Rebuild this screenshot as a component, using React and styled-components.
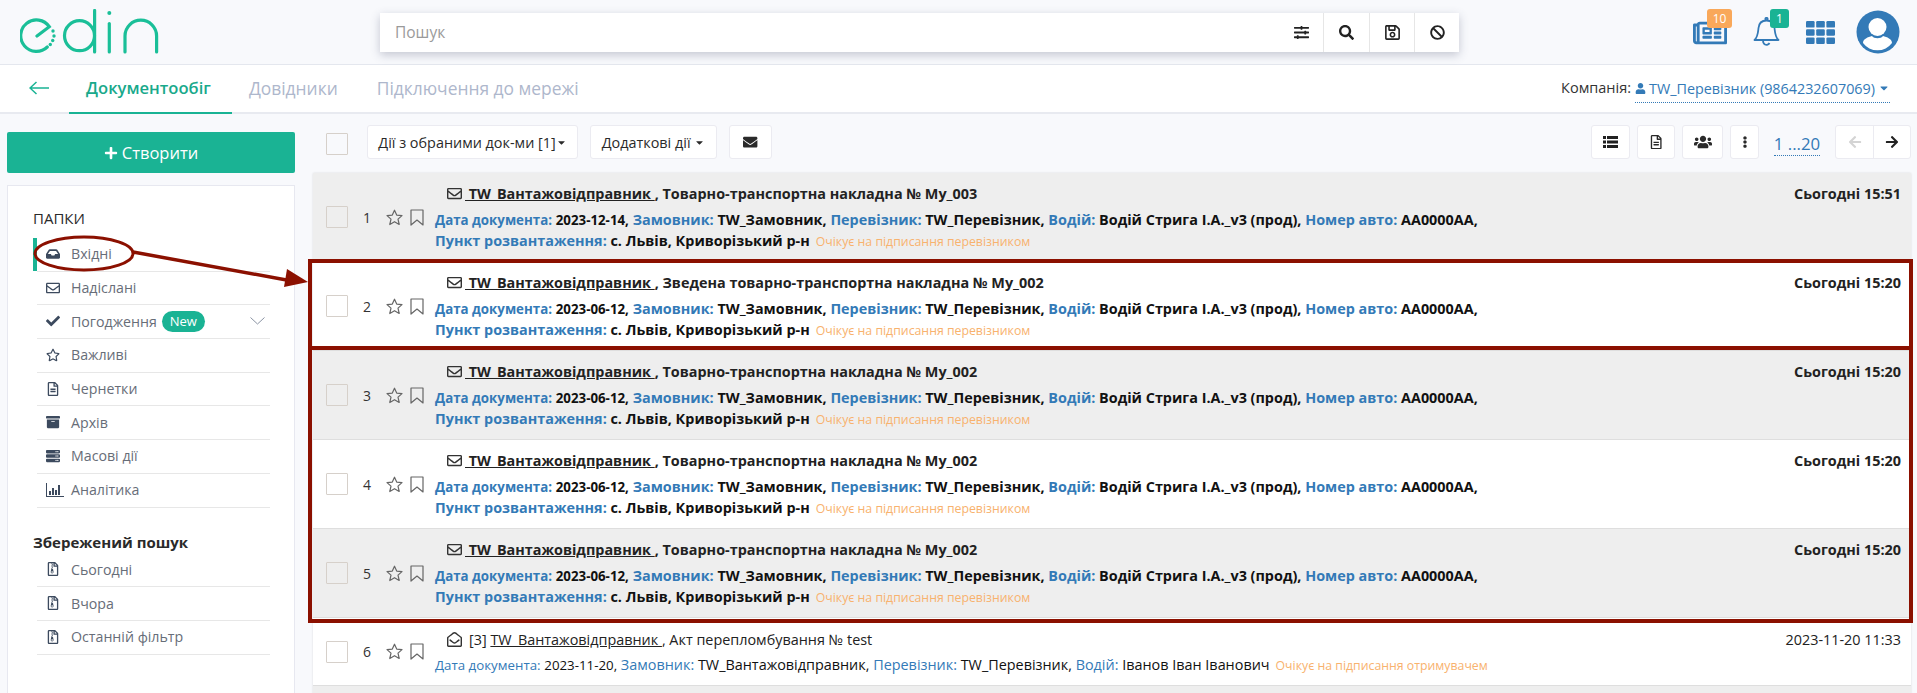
import React from 'react';
import styled, { createGlobalStyle } from 'styled-components';
import {
  FaRegEnvelope, FaRegEnvelopeOpen, FaSearch, FaRegSave, FaBan, FaSlidersH, FaCheck, FaRegStar,
  FaArchive, FaServer, FaRegFileAlt, FaUsers, FaEllipsisV, FaArrowLeft, FaArrowRight, FaUser,
  FaRegNewspaper, FaRegFileArchive, FaPlus, FaCaretDown, FaEnvelope, FaInbox,
} from 'react-icons/fa';

const Global = createGlobalStyle`
  html, body { margin: 0; padding: 0; background: #f8f9fc; height: 693px; overflow: hidden; }
  body { font-family: "Open Sans", "Noto Sans", sans-serif; font-size: 14px; color: #2a2a2a; }
  * { box-sizing: border-box; }
`;

const Page = styled.div`position: relative; width: 1917px; height: 693px; overflow: hidden;`;

const Header = styled.header`
  height: 65px; display: flex; align-items: flex-start; border-bottom: 1px solid #e4e7ee; padding-left: 20px; position: relative;
`;
const Logo = styled.svg`width: 140px; height: 46px; margin-top: 9px; flex: none;`;
const SearchBox = styled.div`
  margin: 13px 0 0 220px; width: 1079px; height: 39px; background: #fff; display: flex; align-items: stretch;
  box-shadow: 0 3px 9px rgba(60, 70, 100, .28);
`;
const SearchInput = styled.div`flex: 1; color: #9a9a9a; font-size: 15.5px; padding: 0 0 2px 15px; display: flex; align-items: center;`;
const SearchBtn = styled.div`
  width: ${p => p.$w}px; display: flex; align-items: center; justify-content: center; font-size: 15px; color: #222;
  border-left: ${p => (p.$plain ? 'none' : '1px solid #e6e6e6')};
`;
const HeaderIcons = styled.div`
  margin-left: auto; display: flex; align-items: flex-start; padding-right: 17px;
`;
const IconSlot = styled.div`position: relative; color: #337ab7; margin-left: ${p => p.$ml}px; margin-top: ${p => p.$mt}px; line-height: 0;`;
const Badge = styled.span`
  position: absolute; top: ${p => p.$top}px; left: ${p => p.$left}px; width: ${p => p.$w}px; height: 19px; border-radius: 3px;
  background: ${p => p.$c}; color: #fff; font-size: 12px; line-height: 19px; text-align: center;
`;

const Nav = styled.nav`
  height: 49px; background: #fff; border-bottom: 2px solid #e8eaf0; display: flex; align-items: stretch; padding-left: 29px;
`;
const Back = styled.div`width: 40px; color: #19b394; display: flex; align-items: center; padding-bottom: 2px;`;
const Tab = styled.div`
  font-size: ${p => (p.$on ? 16.6 : 17.4)}px; font-weight: ${p => (p.$on ? 600 : 500)}; color: ${p => (p.$on ? '#19a98b' : '#aeb7cc')};
  padding: 0 ${p => p.$pr}px 2px ${p => p.$pl}px; display: flex; align-items: center; height: 49px;
  border-bottom: 2px solid ${p => (p.$on ? '#19b394' : 'transparent')}; white-space: nowrap;
`;
const Company = styled.div`margin-left: auto; padding-right: 27px; display: flex; align-items: center; font-size: 14.5px; padding-bottom: 2px; color: #333;`;
const CompanyLink = styled.span`
  color: #337ab7; font-size: 14.35px; margin-left: 4px; border-bottom: 1px dotted #337ab7; display: inline-flex; align-items: center; gap: 3px; height: 25px; margin-top: 5px; padding-bottom: 3px;
`;

const Body = styled.div`display: flex; align-items: flex-start; height: 579px;`;
const Side = styled.aside`width: 288px; margin: 18px 0 0 7px; flex: none;`;
const CreateBtn = styled.div`
  height: 41px; background: #1ab394; border-radius: 2px; color: #fff; font-size: 16.5px; display: flex; align-items: center; justify-content: center; gap: 4px;
`;
const Panel = styled.div`
  margin-top: 12px; height: 520px; background: #fff; border: 1px solid #e7e8f0; padding: 23px 24px 0 25px;
`;
const PanelTitle = styled.div`font-size: 15px; font-weight: 500; color: #2a2a2a; line-height: 19px; margin-bottom: 10px;`;
const SavedTitle = styled.div`font-size: 15px; font-weight: 700; color: #2a2a2a; line-height: 19px; margin: 25px 0 2px 0;`;
const Item = styled.div`
  position: relative; height: 33.7px; margin-left: 4px; border-bottom: 1px solid #e7e7e7; display: flex; align-items: center; padding: 0 0 1px 9px; color: #676d78; font-size: 14.2px;
  &::before { content: ''; display: ${p => (p.$on ? 'block' : 'none')}; position: absolute; left: -4px; top: 0; bottom: 0; width: 4px; background: #1ab394; }
`;
const ItemIcon = styled.span`width: 25px; color: #3c4a5e; font-size: 14px; display: flex; align-items: center; flex: none;`;
const Pill = styled.span`
  margin-left: 5px; background: #1ab394; color: #fff; border-radius: 11px; height: 21px; width: 43px; display: flex; align-items: center; justify-content: center; font-size: 13px; font-weight: 500;
`;
const Chevron = styled.svg`margin-left: auto; margin-right: 5px; width: 15px; height: 8px;`;

const Main = styled.main`flex: 1; padding: 11px 0 0 18px; min-width: 0;`;
const Toolbar = styled.div`height: 48px; display: flex; align-items: flex-start;`;
const Check = styled.span`
  display: block; flex: none; width: 22px; height: 22px; border: 1px solid #d6d0ca; border-radius: 1px;
`;
const ToolCheck = styled(Check)`margin: 8px 19px 0 13px;`;
const ToolBtn = styled.div`
  height: 34px; width: ${p => p.$w}px; margin-left: ${p => p.$ml ?? 0}px; background: #fff; border: 1px solid #ebebf1; border-radius: 3px; display: flex; align-items: center; justify-content: center; font-size: 14.4px; color: #2a2a2a; flex: none;
`;
const PageLink = styled.div`
  margin: 0 15px 0 15px; width: 46px; height: 31px; padding-top: 7px; color: #337ab7; font-size: 16.8px; border-bottom: 1px dotted #337ab7; display: flex; align-items: center; justify-content: center; white-space: nowrap;
`;
const BtnGroup = styled.div`display: flex; background: #fff; border: 1px solid #ebebf1; border-radius: 3px; height: 34px;`;
const GroupBtn = styled.div`width: 37px; display: flex; align-items: center; justify-content: center; font-size: 14px; color: ${p => (p.$off ? '#d4d4d4' : '#222')}; & + & { border-left: 1px solid #ebebf1; }`;
const Spacer = styled.div`flex: 1;`;
const Gap = styled.div`width: 6px; flex: none;`;

const List = styled.div`width: 1598px; box-shadow: 0 0 2px rgba(0,0,0,.12);`;
const Group = styled.div`
  position: relative;
  &::after { content: ''; position: absolute; z-index: 2; inset: ${p => p.$inset}; border: 4px solid #8b1000; pointer-events: none; }
`;
const Row = styled.div`
  height: ${p => p.$h}px; background: ${p => (p.$grey ? '#eeeeee' : '#fff')}; border-bottom: 1px solid #dedede; display: flex; align-items: center; padding-left: 13px;
`;
const Num = styled.span`width: 38px; flex: none; text-align: center; font-size: 14px; color: #333;`;
const Acts = styled.span`display: flex; align-items: center; width: 49px; flex: none; gap: 7px;`;
const Content = styled.div`flex: 1; min-width: 0; align-self: flex-start; padding: ${p => p.$pt ?? 10}px 10px 0 0;`;
const TitleLine = styled.div`display: flex; align-items: center; height: 21px; font-size: 14.4px; font-weight: ${p => (p.$read ? 400 : 700)}; color: #222; padding-left: 12px;`;
const TitleIcon = styled.span`display: inline-flex; width: ${p => p.$w ?? 18}px; flex: none; font-size: 15px; font-weight: 400; color: #333;`;
const Sender = styled.span`text-decoration: underline; white-space: pre;`;
const Subject = styled.span`white-space: pre;`;
const Time = styled.span`margin-left: auto; white-space: nowrap;`;
const Line = styled.div`height: 21px; line-height: 21px; margin-top: ${p => p.$mt ?? 0}px; font-size: 14.4px; font-weight: ${p => (p.$read ? 400 : 700)}; color: #111; white-space: nowrap;`;
const Label = styled.span`color: #337ab7; font-size: ${p => (p.$small ? 13.3 : 14.4)}px;`;
const Small = styled.span`font-size: 13.3px;`;
const Status = styled.span`color: #f8b26e; font-size: 12.3px; font-weight: 400; margin-left: 6px;`;

const Overlay = styled.svg`position: absolute; left: 0; top: 0; width: 1917px; height: 693px; pointer-events: none;`;

const Avatar = () => (
  <svg width="44" height="44" viewBox="0 0 44 44">
    <circle cx="22" cy="22" r="21.5" fill="#337ab7" />
    <circle cx="21.5" cy="17" r="9" fill="#fff" />
    <path d="M7 33 C7 29 12 27 16 26 C18 29 25 29 27 26 C31 27 36 29 36 33 A18 18 0 0 1 7 33 Z" fill="#fff" />
  </svg>
);
const Bell = () => (
  <svg width="27" height="29" viewBox="0 0 27 29" fill="none" stroke="#337ab7" strokeWidth="1.8" strokeLinejoin="round">
    <path d="M1.5 23 C5 20 5 15 5.5 11 C6 6 9 3.5 13.5 3.5 C18 3.5 21 6 21.5 11 C22 15 22 20 25.5 23 Z" />
    <path d="M10.5 23 a3 3 0 0 0 6 3 " />
    <circle cx="13.5" cy="2" r="1.2" />
  </svg>
);
const Grid = () => (
  <svg width="29" height="23" viewBox="0 0 29 23" fill="#337ab7">
    {[0, 1, 2].flatMap(r => [0, 1, 2].map(c => <rect key={`${r}-${c}`} x={c * 10.2} y={r * 8.2} width="8.6" height="6.6" rx="1.2" />))}
  </svg>
);
const Star = () => (
  <svg width="17" height="17" viewBox="0 0 17 17" fill="none" stroke="#666" strokeWidth="1.2" strokeLinejoin="round">
    <path d="M8.5 1.2 L10.7 6.1 L16 6.6 L12 10.1 L13.2 15.5 L8.5 12.7 L3.8 15.5 L5 10.1 L1 6.6 L6.3 6.1 Z" />
  </svg>
);
const Bookmark = () => (
  <svg width="14" height="17" viewBox="0 0 14 17" fill="none" stroke="#666" strokeWidth="1.2" strokeLinejoin="round">
    <path d="M1 1 H13 V16 L7 11 L1 16 Z" />
  </svg>
);
const BackArrow = () => (
  <svg width="20" height="14" viewBox="0 0 20 14" fill="none" stroke="#19b394" strokeWidth="1.5">
    <path d="M20 7 H1 M7.5 1 L1 7 L7.5 13" />
  </svg>
);
const ChartIcon = () => (
  <svg width="18" height="14" viewBox="0 0 18 14" fill="#3c4a5e">
    <rect x="0" y="0" width="1" height="14" /><rect x="0" y="13" width="18" height="1" />
    <rect x="3" y="8" width="2" height="4" /><rect x="6" y="5" width="2" height="7" /><rect x="9" y="7" width="2" height="5" /><rect x="12" y="2" width="2" height="10" />
  </svg>
);
const ListIcon = () => (
  <svg width="15" height="12" viewBox="0 0 15 12" fill="#222">
    {[0, 4.5, 9].map(y => (
      <g key={y}><rect x="0" y={y} width="3" height="3" /><rect x="4" y={y} width="11" height="3" /></g>
    ))}
  </svg>
);

const folders = [
  [<FaInbox />, 'Вхідні', true],
  [<FaRegEnvelope />, 'Надіслані'],
  [<FaCheck />, 'Погодження', false, true],
  [<FaRegStar />, 'Важливі'],
  [<FaRegFileAlt />, 'Чернетки'],
  [<FaArchive />, 'Архів'],
  [<FaServer />, 'Масові дії'],
  [<ChartIcon />, 'Аналітика'],
];
const saved = ['Сьогодні', 'Вчора', 'Останній фільтр'];

const RowView = ({ n, grey, date = '2023-06-12', subject, time = 'Сьогодні 15:20' }) => (
  <Row $grey={grey} $h={89}>
    <Check />
    <Num>{n}</Num>
    <Acts><Star /><Bookmark /></Acts>
    <Content>
      <TitleLine>
        <TitleIcon><FaRegEnvelope /></TitleIcon>
        <Sender> TW_Вантажовідправник </Sender>
        <Subject>, {subject}</Subject>
        <Time>{time}</Time>
      </TitleLine>
      <Line $mt={5}>
        <Label $small>Дата документа:</Label> <Small>{date},</Small> <Label>Замовник:</Label> TW_Замовник, <Label>Перевізник:</Label> TW_Перевізник, <Label>Водій:</Label> Водій Стрига І.А._v3 (прод), <Label>Номер авто:</Label> АА0000АА,
      </Line>
      <Line>
        <Label>Пункт розвантаження:</Label> с. Львів, Криворізький р-н<Status>Очікує на підписання перевізником</Status>
      </Line>
    </Content>
  </Row>
);

export default function App() {
  return (
    <Page>
      <Global />
      <Header>
        <Logo viewBox="20 9 140 46">
          <g fill="none" stroke="#1abf98" strokeWidth="3.2" strokeLinecap="round">
            <path d="M37 36 L49.3 26.7 A15.7 15.7 0 1 0 47.3 47" />
            <circle cx="79.5" cy="35.7" r="15" />
            <path d="M94.6 10.5 V52" />
            <path d="M109.3 23.5 V52" />
            <path d="M125 52 V36 a15.8 15.8 0 0 1 31.6 0 V52" />
          </g>
          <g fill="#1abf98">
            <circle cx="53" cy="31" r="1.7" /><circle cx="54" cy="36" r="1.7" /><circle cx="52.7" cy="40.5" r="1.7" /><circle cx="50.3" cy="44.5" r="1.7" />
            <circle cx="109.3" cy="13" r="2" />
          </g>
        </Logo>
        <SearchBox>
          <SearchInput>Пошук</SearchInput>
          <SearchBtn $w={44} $plain><FaSlidersH /></SearchBtn>
          <SearchBtn $w={46}><FaSearch /></SearchBtn>
          <SearchBtn $w={45}><FaRegSave size={17} /></SearchBtn>
          <SearchBtn $w={45}><FaBan /></SearchBtn>
        </SearchBox>
        <HeaderIcons>
          <IconSlot $ml={0} $mt={16}>
            <FaRegNewspaper size={34} />
            <Badge $top={-7} $left={14} $w={25} $c="#f9a85a">10</Badge>
          </IconSlot>
          <IconSlot $ml={26} $mt={17}>
            <Bell />
            <Badge $top={-8} $left={17} $w={19} $c="#1ab394">1</Badge>
          </IconSlot>
          <IconSlot $ml={26} $mt={21}>
            <Grid />
          </IconSlot>
          <IconSlot $ml={21} $mt={10}>
            <Avatar />
          </IconSlot>
        </HeaderIcons>
      </Header>
      <Nav>
        <Back><BackArrow /></Back>
        <Tab $on $pl={17} $pr={21}>Документообіг</Tab>
        <Tab $pl={17} $pr={17}>Довідники</Tab>
        <Tab $pl={22} $pr={17}>Підключення до мережі</Tab>
        <Company>
          Компанія:
          <CompanyLink><FaUser size={11} />TW_Перевізник (9864232607069)<FaCaretDown size={12} /></CompanyLink>
        </Company>
      </Nav>
      <Body>
        <Side>
          <CreateBtn><FaPlus size={14} />Створити</CreateBtn>
          <Panel>
            <PanelTitle>ПАПКИ</PanelTitle>
            {folders.map(([icon, label, on, pill]) => (
              <Item key={label} $on={on}>
                <ItemIcon>{icon}</ItemIcon>{label}
                {pill && <Pill>New</Pill>}
                {pill && <Chevron viewBox="0 0 15 8"><path d="M0.5 0.5 L7.5 7 L14.5 0.5" fill="none" stroke="#8a93a3" strokeWidth="1" /></Chevron>}
              </Item>
            ))}
            <SavedTitle>Збережений пошук</SavedTitle>
            {saved.map(label => (
              <Item key={label}><ItemIcon><FaRegFileArchive /></ItemIcon>{label}</Item>
            ))}
          </Panel>
        </Side>
        <Main>
          <Toolbar>
            <ToolCheck />
            <ToolBtn $w={211}>Дії з обраними док-ми [1]<FaCaretDown size={11} /></ToolBtn>
            <ToolBtn $w={127} $ml={12}>Додаткові дії&nbsp;<FaCaretDown size={11} /></ToolBtn>
            <ToolBtn $w={43} $ml={12}><FaEnvelope /></ToolBtn>
            <Spacer />
            <ToolBtn $w={39}><ListIcon /></ToolBtn>
            <ToolBtn $w={38} $ml={7}><FaRegFileAlt /></ToolBtn>
            <ToolBtn $w={41} $ml={7}><FaUsers size={18} /></ToolBtn>
            <ToolBtn $w={29} $ml={7}><FaEllipsisV size={12} /></ToolBtn>
            <PageLink>1 ...20</PageLink>
            <BtnGroup>
              <GroupBtn $off><FaArrowLeft /></GroupBtn>
              <GroupBtn><FaArrowRight /></GroupBtn>
            </BtnGroup>
            <Gap />
          </Toolbar>
          <List>
            <RowView n={1} grey date="2023-12-14" subject="Товарно-транспортна накладна № Му_003" time="Сьогодні 15:51" />
            <Group $inset="-3px -2px 1px -5px">
              <RowView n={2} subject="Зведена товарно-транспортна накладна № Му_002" />
            </Group>
            <Group $inset="-5px -2px -5px -5px">
              <RowView n={3} grey subject="Товарно-транспортна накладна № Му_002" />
              <RowView n={4} subject="Товарно-транспортна накладна № Му_002" />
              <RowView n={5} grey subject="Товарно-транспортна накладна № Му_002" />
            </Group>
            <Row $h={68}>
              <Check />
              <Num>6</Num>
              <Acts><Star /><Bookmark /></Acts>
              <Content $pt={11}>
                <TitleLine $read>
                  <TitleIcon $w={22}><FaRegEnvelopeOpen /></TitleIcon>
                  <Subject>[3] </Subject>
                  <Sender>TW_Вантажовідправник </Sender>
                  <Subject>, Акт перепломбування № test</Subject>
                  <Time>2023-11-20 11:33</Time>
                </TitleLine>
                <Line $read $mt={4}>
                  <Label $small>Дата документа:</Label> <Small>2023-11-20,</Small> <Label>Замовник:</Label> TW_Вантажовідправник, <Label>Перевізник:</Label> TW_Перевізник, <Label>Водій:</Label> Іванов Іван Іванович<Status>Очікує на підписання отримувачем</Status>
                </Line>
              </Content>
            </Row>
            <Row $h={10} $grey />
          </List>
        </Main>
      </Body>
      <Overlay viewBox="0 0 1917 693">
        <ellipse cx="84" cy="253.5" rx="49" ry="16.5" fill="none" stroke="#8b1000" strokeWidth="3" />
        <path d="M133 252 L292 281" fill="none" stroke="#8b1000" strokeWidth="3.5" />
        <path d="M308 282 L287 269 L284 287 Z" fill="#8b1000" />
      </Overlay>
    </Page>
  );
}
